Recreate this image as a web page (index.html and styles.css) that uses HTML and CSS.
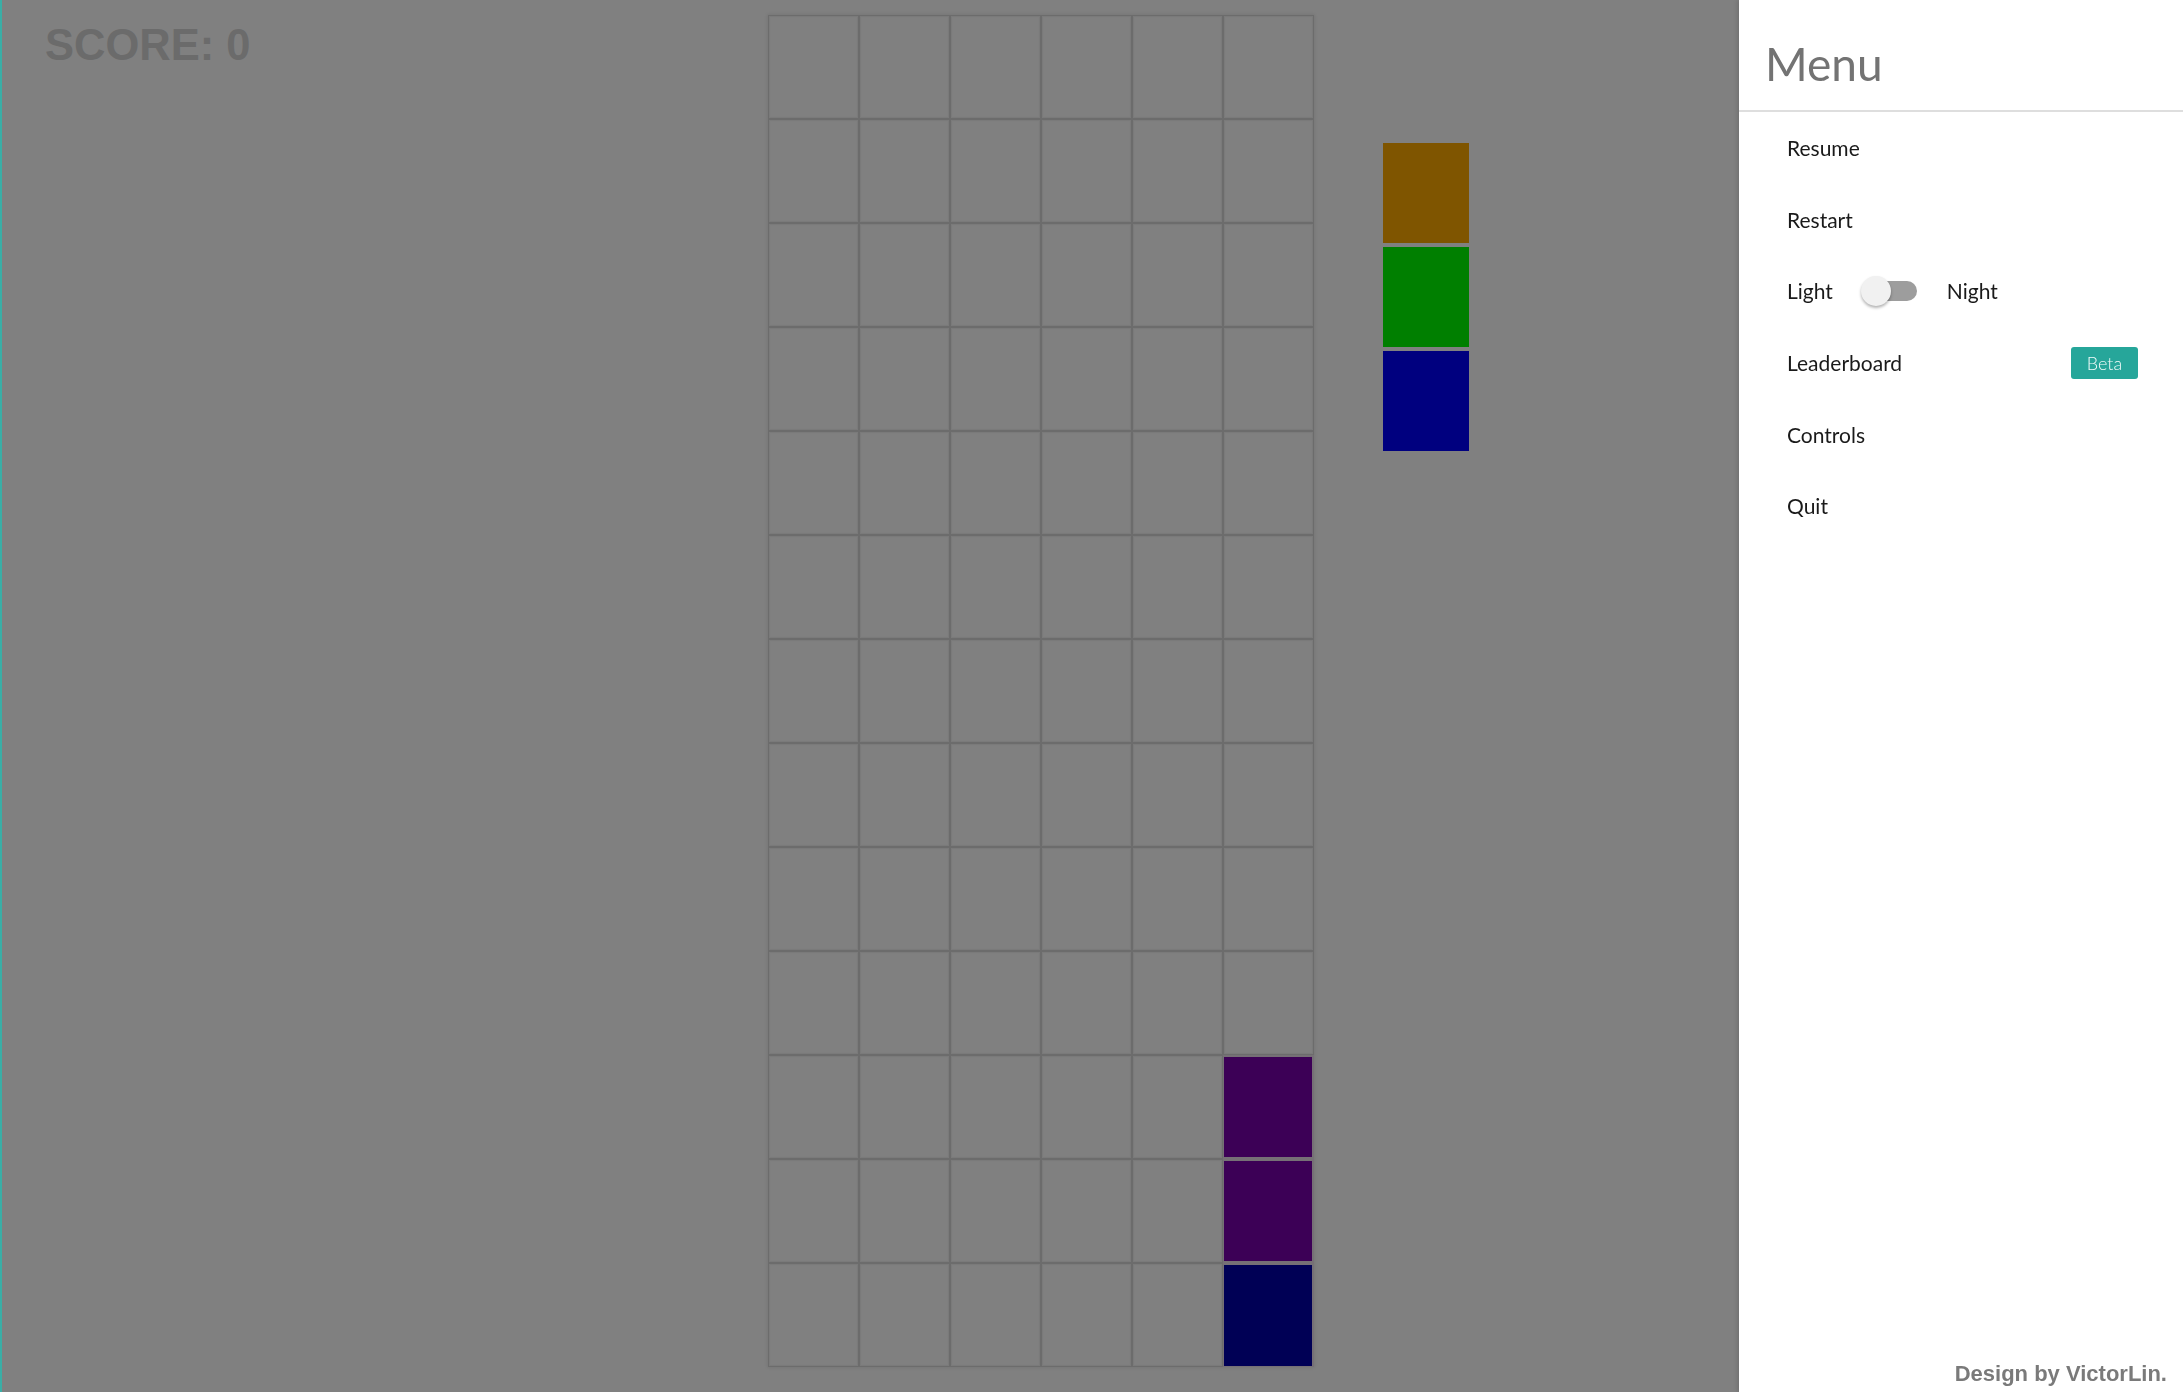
FILE: index.html
```html
<!DOCTYPE html>
<html lang="en">
<head>
<meta charset="utf-8">
<title>Tetris</title>
<link rel="stylesheet" href="styles.css">
</head>
<body>
<div class="game">
  <div class="score-col">
    <div class="score">SCORE: 0</div>
  </div>
  <div class="board">
    <div class="cell"></div><div class="cell"></div><div class="cell"></div><div class="cell"></div><div class="cell"></div><div class="cell"></div>
    <div class="cell"></div><div class="cell"></div><div class="cell"></div><div class="cell"></div><div class="cell"></div><div class="cell"></div>
    <div class="cell"></div><div class="cell"></div><div class="cell"></div><div class="cell"></div><div class="cell"></div><div class="cell"></div>
    <div class="cell"></div><div class="cell"></div><div class="cell"></div><div class="cell"></div><div class="cell"></div><div class="cell"></div>
    <div class="cell"></div><div class="cell"></div><div class="cell"></div><div class="cell"></div><div class="cell"></div><div class="cell"></div>
    <div class="cell"></div><div class="cell"></div><div class="cell"></div><div class="cell"></div><div class="cell"></div><div class="cell"></div>
    <div class="cell"></div><div class="cell"></div><div class="cell"></div><div class="cell"></div><div class="cell"></div><div class="cell"></div>
    <div class="cell"></div><div class="cell"></div><div class="cell"></div><div class="cell"></div><div class="cell"></div><div class="cell"></div>
    <div class="cell"></div><div class="cell"></div><div class="cell"></div><div class="cell"></div><div class="cell"></div><div class="cell"></div>
    <div class="cell"></div><div class="cell"></div><div class="cell"></div><div class="cell"></div><div class="cell"></div><div class="cell"></div>
    <div class="cell"></div><div class="cell"></div><div class="cell"></div><div class="cell"></div><div class="cell"></div><div class="cell purple"></div>
    <div class="cell"></div><div class="cell"></div><div class="cell"></div><div class="cell"></div><div class="cell"></div><div class="cell purple"></div>
    <div class="cell"></div><div class="cell"></div><div class="cell"></div><div class="cell"></div><div class="cell"></div><div class="cell navy"></div>
  </div>
  <div class="preview">
    <div class="pcell orange"></div>
    <div class="pcell green"></div>
    <div class="pcell blue"></div>
  </div>
</div>

<aside class="sidenav">
  <div class="nav-header">Menu</div>
  <ul class="nav-list">
    <li class="nav-item">Resume</li>
    <li class="nav-item">Restart</li>
    <li class="nav-item">
      <span>Light</span>
      <span class="lever"></span>
      <span>Night</span>
    </li>
    <li class="nav-item">
      <span>Leaderboard</span>
      <span class="badge">Beta</span>
    </li>
    <li class="nav-item">Controls</li>
    <li class="nav-item">Quit</li>
  </ul>
  <div class="credit">Design by VictorLin.</div>
</aside>
</body>
</html>
```
FILE: styles.css
```css
html, body {
  margin: 0;
  padding: 0;
  height: 100%;
}

body {
  background: #808080;
  border-left: 2px solid #3aaea6;
  box-sizing: border-box;
  overflow: hidden;
  font-family: "Liberation Sans", Arial, sans-serif;
}

.game {
  display: flex;
  align-items: flex-start;
  padding-top: 15px;
}

.score-col {
  width: 766px;
  box-sizing: border-box;
  padding-left: 43px;
}

.score {
  margin-top: 8px;
  font-size: 43.5px;
  line-height: 44px;
  font-weight: bold;
  color: #6b6b6b;
}

.board {
  display: grid;
  grid-template-columns: repeat(6, 91px);
  grid-template-rows: repeat(13, 104px);
  box-shadow: 0 0 3px 1px rgba(0, 0, 0, 0.08);
}

.cell {
  box-sizing: border-box;
  border: 1px solid #6c6c6c;
  box-shadow: inset 0 0 1px 1px rgba(0, 0, 0, 0.05);
}

.cell.purple {
  background: #3c0056;
  border-color: #767076;
  border-width: 2px 2px 2px 1px;
  box-shadow: none;
}

.cell.navy {
  background: #000055;
  border-color: #767076;
  border-width: 2px 2px 1px 1px;
  box-shadow: none;
}

.preview {
  margin-left: 67px;
  margin-top: 126px;
  display: flex;
  flex-direction: column;
}

.pcell {
  width: 90px;
  height: 104px;
  box-sizing: border-box;
  border: 2px solid #808080;
}

.pcell.orange { background: #7f5500; }
.pcell.green { background: #007f00; }
.pcell.blue { background: #00007f; }

/* Side navigation drawer (overlays the page) */
.sidenav {
  position: fixed;
  top: 0;
  right: 0;
  width: 444px;
  height: 100%;
  background: #ffffff;
  box-shadow: -2px 0 4px rgba(0, 0, 0, 0.12);
  display: flex;
  flex-direction: column;
  font-family: Lato, "Open Sans", sans-serif;
}

.nav-header {
  height: 93px;
  padding-top: 17px;
  padding-left: 26px;
  line-height: 93px;
  font-size: 46px;
  color: #737373;
  border-bottom: 2px solid #dedede;
}

.nav-list {
  list-style: none;
  margin: 0;
  padding: 0;
}

.nav-item {
  height: 71.6px;
  display: flex;
  align-items: center;
  padding: 0 45px 0 48px;
  font-size: 21px;
  color: #1a1a1a;
}

.lever {
  position: relative;
  width: 52px;
  height: 20px;
  margin: 0 30px 0 32px;
  border-radius: 10px;
  background: #9d9d9d;
}

.lever::before {
  content: "";
  position: absolute;
  left: -4px;
  top: -5px;
  width: 30px;
  height: 30px;
  border-radius: 50%;
  background: #f1f1f1;
  box-shadow: 0 2px 3px rgba(0, 0, 0, 0.3);
}

.badge {
  margin-left: auto;
  width: 67px;
  height: 32px;
  line-height: 32px;
  text-align: center;
  border-radius: 3px;
  background: #26a69a;
  color: #f2fbfa;
  font-size: 18px;
  font-weight: 300;
}

.credit {
  margin-top: auto;
  padding: 0 16px 5px 0;
  text-align: right;
  font-family: "Liberation Sans", Arial, sans-serif;
  font-weight: bold;
  font-size: 22px;
  color: #7a7a7a;
}
```
